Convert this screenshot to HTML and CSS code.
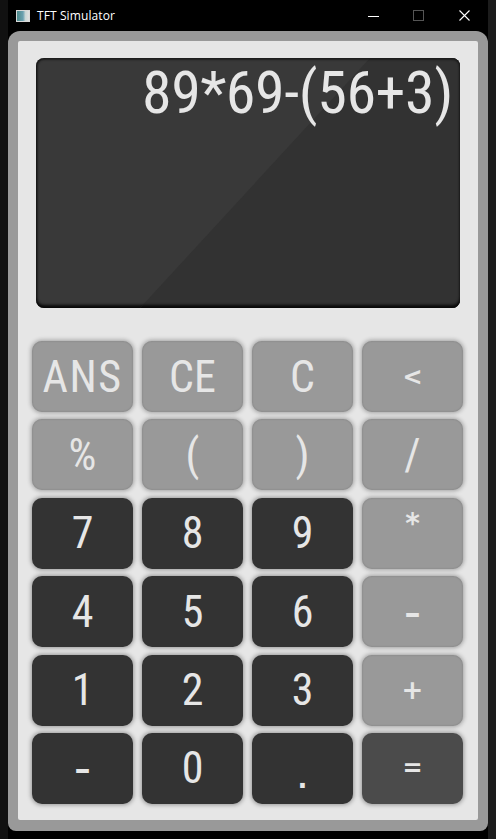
FILE: index.html
```html
<!DOCTYPE html>
<html>
<head>
<meta charset="utf-8">
<link rel="stylesheet" href="styles.css">
</head>
<body>
<div class="desktop">
  <div class="side side-left"></div>
  <div class="window">
    <div class="titlebar">
      <span class="app-icon"><span class="app-icon-inner"></span></span>
      <span class="title">TFT Simulator</span>
      <span class="controls">
        <span class="ctl ctl-min"></span>
        <span class="ctl ctl-max"></span>
        <svg class="ctl ctl-close" width="11" height="11" viewBox="0 0 11 11"><path d="M0.5 0.5 L10.5 10.5 M10.5 0.5 L0.5 10.5" stroke="#fff" stroke-width="1.1"/></svg>
      </span>
    </div>
    <div class="calc">
      <div class="panel">
        <div class="screen">
          <div class="expr">89*69-(56+3)</div>
        </div>
        <div class="keys">
          <div class="key gray wide">ANS</div>
          <div class="key gray">CE</div>
          <div class="key gray">C</div>
          <div class="key gray"><span class="op op-lt">&lt;</span></div>
          <div class="key gray">%</div>
          <div class="key gray">(</div>
          <div class="key gray">)</div>
          <div class="key gray">/</div>
          <div class="key dark">7</div>
          <div class="key dark">8</div>
          <div class="key dark">9</div>
          <div class="key gray"><span class="op op-star">*</span></div>
          <div class="key dark">4</div>
          <div class="key dark">5</div>
          <div class="key dark">6</div>
          <div class="key gray"><span class="op op-minus">–</span></div>
          <div class="key dark">1</div>
          <div class="key dark">2</div>
          <div class="key dark">3</div>
          <div class="key gray"><span class="op op-plus">+</span></div>
          <div class="key dark"><span class="op op-minus">–</span></div>
          <div class="key dark">0</div>
          <div class="key dark"><span class="op op-dot">.</span></div>
          <div class="key eq"><span class="op op-eq">=</span></div>
        </div>
      </div>
    </div>
  </div>
  <div class="side side-right"></div>
</div>
</body>
</html>
```

FILE: styles.css
```css
html, body {
  margin: 0;
  padding: 0;
  background: #141414;
}
body {
  width: 496px;
  height: 839px;
  overflow: hidden;
}
.desktop {
  display: flex;
  height: 839px;
}
.side {
  width: 8px;
  flex: none;
}
.side-left {
  background: #111;
}
.side-right {
  background: #1c1c1c;
}
.window {
  width: 480px;
  flex: none;
  background: #000;
  display: flex;
  flex-direction: column;
  height: 839px;
}
.titlebar {
  height: 31px;
  flex: none;
  display: flex;
  align-items: center;
  color: #fff;
  font-family: "Open Sans", "Noto Sans", sans-serif;
  font-size: 12px;
}
.app-icon {
  width: 14px;
  height: 12px;
  margin-left: 8px;
  background: #d8d8d8;
  display: flex;
  padding: 1px;
  box-sizing: border-box;
}
.app-icon-inner {
  flex: 1;
  background: linear-gradient(90deg, #4d8a8a 0%, #6aa0b0 50%, #c9d6d6 70%, #e0e0e0 100%);
}
.title {
  margin-left: 7px;
  letter-spacing: 0.1px;
}
.controls {
  margin-left: auto;
  display: flex;
  align-items: center;
  height: 31px;
}
.ctl {
  display: block;
}
.ctl-min {
  width: 11px;
  height: 1px;
  background: #fff;
  margin-right: 34px;
  margin-top: 1px;
}
.ctl-max {
  width: 9px;
  height: 9px;
  border: 1px solid #555;
  margin-right: 35px;
}
.ctl-close {
  margin-right: 18px;
}
.calc {
  height: 800px;
  flex: none;
  background: #999;
  border-radius: 12px 12px 8px 8px;
  padding: 10px 10px 11px 10px;
  box-sizing: border-box;
  display: flex;
}
.panel {
  flex: 1;
  background: #e6e6e6;
  border-radius: 2px;
  padding: 17px 15px 0 14px;
  display: flex;
  flex-direction: column;
}
.screen {
  position: relative;
  margin: 0 3px 0 4px;
  height: 250px;
  border-radius: 8px;
  background: #393939;
  box-shadow: inset 0 -3px 3px rgba(0,0,0,0.85), inset 0 2px 2px rgba(0,0,0,0.45), inset 2px 0 2px rgba(0,0,0,0.25);
}
.screen::before {
  content: "";
  position: absolute;
  inset: 0;
  border-radius: 8px;
  background: #323232;
  clip-path: polygon(334px 0, 100% 0, 100% 100%, 104px 100%);
  box-shadow: inset 0 -3px 3px rgba(0,0,0,0.85), inset 0 2px 2px rgba(0,0,0,0.45);
}
.expr {
  position: relative;
  text-align: right;
  color: #e6e6e6;
  font-family: "Roboto Condensed", "Liberation Sans Narrow", "DejaVu Sans Condensed", sans-serif;
  font-size: 60px;
  line-height: 70px;
  padding: 0 7px 0 0;
  letter-spacing: -0.4px;
}
.keys {
  margin-top: 33px;
  display: grid;
  grid-template-columns: repeat(4, 101px);
  grid-template-rows: repeat(6, 71px);
  column-gap: 9px;
  row-gap: 7.4px;
}
.key {
  border-radius: 10px;
  display: flex;
  align-items: center;
  justify-content: center;
  color: #e6e6e6;
  font-family: "Roboto Condensed", "Liberation Sans Narrow", "DejaVu Sans Condensed", sans-serif;
  font-size: 44px;
  line-height: 1;
  box-shadow: 0 0 4px 1px rgba(0,0,0,0.35);
}
.wide {
  letter-spacing: 1.5px;
}
.gray {
  background: #999;
  box-shadow: 0 0 4px 1px rgba(0,0,0,0.3), inset 0 0 2px rgba(0,0,0,0.2);
}
.dark {
  background: #333;
}
.eq {
  background: #4b4b4b;
}
.op {
  font-family: "DejaVu Sans", sans-serif;
  font-weight: bold;
  display: block;
}
.op-lt {
  font-size: 24px;
}
.op-star {
  font-size: 28px;
  margin-top: -18px;
}
.op-minus {
  font-size: 32px;
  margin-top: 2px;
}
.op-plus {
  font-size: 26px;
}
.op-eq {
  font-size: 24px;
}
.op-dot {
  font-size: 26px;
  margin-top: 22px;
}
```
